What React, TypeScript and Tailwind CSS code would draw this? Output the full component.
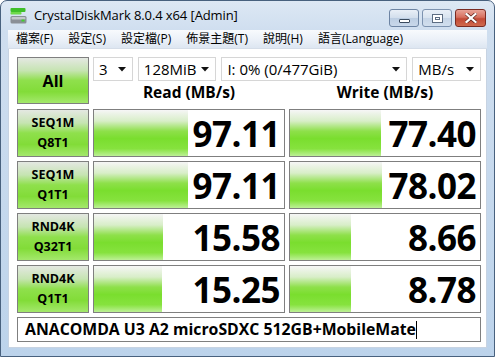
const rows = [
  { label: ["SEQ1M", "Q8T1"], read: "97.11", readBar: 94, write: "77.40", writeBar: 91 },
  { label: ["SEQ1M", "Q1T1"], read: "97.11", readBar: 94, write: "78.02", writeBar: 92 },
  { label: ["RND4K", "Q32T1"], read: "15.58", readBar: 69, write: "8.66", writeBar: 61 },
  { label: ["RND4K", "Q1T1"], read: "15.25", readBar: 68, write: "8.78", writeBar: 61 },
];

const menus = ["檔案(F)", "設定(S)", "設定檔(P)", "佈景主題(T)", "說明(H)", "語言(Language)"];

const greenLabel =
  "bg-[linear-gradient(to_bottom,#e4e8e2_0%,#c6e4b2_28%,#8fe04c_50%,#82dc38_75%,#a4e86c_100%)]";
const greenBar =
  "bg-[linear-gradient(to_bottom,#f6f6f6_0%,#d8eec8_24%,#8ee04a_46%,#7ade2e_62%,#86e23e_84%,#bdf096_100%)]";

const AppIcon = () => (
  <svg width="17" height="17" viewBox="0 0 17 17">
    <rect x="0.5" y="1" width="15" height="4" rx="1" fill="#3fbf2a" />
    <rect x="0.5" y="5" width="11" height="2.5" rx="0.8" fill="#6fd94a" />
    <rect x="0.5" y="9" width="16" height="7.5" rx="1.5" fill="#8a8f96" />
    <rect x="1.5" y="10" width="14" height="2.5" rx="1" fill="#c3c7cc" />
    <rect x="11.5" y="12.5" width="3" height="2" fill="#3fd12a" />
  </svg>
);

const Arrow = () => (
  <svg width="8" height="5" viewBox="0 0 8 5" className="shrink-0">
    <path d="M0 0 H8 L4 4.5 Z" fill="#111" />
  </svg>
);

const Select = ({ text, w }: { text: string; w: string }) => (
  <div
    className={`${w} h-[24px] flex items-center justify-between border border-[#d6d6d6] bg-white pl-[5px] pr-[6px] text-[15px] text-black`}
  >
    <span className="whitespace-nowrap">{text}</span>
    <Arrow />
  </div>
);

const LabelBox = ({ lines }: { lines: string[] }) => (
  <div
    className={`h-[48px] border-[1.5px] border-[#7f7f7f] ${greenLabel} flex flex-col items-center justify-center text-[12.5px] font-bold leading-[20px] text-black`}
  >
    {lines.map((l) => (
      <div key={l}>{l}</div>
    ))}
  </div>
);

const ResultBox = ({ value, bar }: { value: string; bar: number }) => (
  <div className="relative h-[48px] border-[1.5px] border-[#7f7f7f] bg-white flex items-center justify-end pr-[4px]">
    <div className={`absolute left-0 top-0 bottom-0 ${greenBar}`} style={{ width: bar }} />
    <span className="relative text-[35px] font-bold leading-none tracking-[-0.5px] text-black">{value}</span>
  </div>
);

export default function App() {
  return (
    <div className="w-[496px] h-[358px] font-['Open_Sans','Noto_Sans_CJK_TC',sans-serif]">
      <div className="w-[495px] h-[357px] rounded-t-[7px] border border-[#48617e] bg-[linear-gradient(to_bottom,#dde8f4_0px,#cfdeef_30px,#bcd3eb_100%)] flex flex-col">
        {/* title bar */}
        <div className="h-[29px] flex items-center pl-[9px] pr-[8px] shrink-0">
          <AppIcon />
          <div className="ml-[7px] text-[13px] text-black tracking-[-0.1px]">CrystalDiskMark 8.0.4 x64 [Admin]</div>
          <div className="ml-auto flex gap-[3px] self-start mt-[8px]">
            <div className="w-[30px] h-[18px] rounded-[3px] border border-[#6d84a3] bg-[linear-gradient(to_bottom,#e9eff7_0%,#d2deec_50%,#bccde2_51%,#c9d8ea_100%)] flex items-center justify-center">
              <div className="w-[11px] h-[4px] mt-[5px] bg-white border border-[#3a4a5e] rounded-[1px]" />
            </div>
            <div className="w-[30px] h-[18px] rounded-[3px] border border-[#7d93b0] bg-[linear-gradient(to_bottom,#e9eff7_0%,#d8e3ef_50%,#c6d5e7_51%,#d2dfee_100%)] flex items-center justify-center">
              <div className="w-[11px] h-[9px] border-[1.5px] border-[#5d6d82] bg-white flex items-center justify-center">
                <div className="w-[5px] h-[3px] border border-[#5d6d82]" />
              </div>
            </div>
            <div className="w-[31px] h-[18px] rounded-[3px] border border-[#7a2b22] bg-[linear-gradient(to_bottom,#e8a397_0%,#d7705f_45%,#c24a36_55%,#d06a4e_100%)] flex items-center justify-center">
              <svg width="12" height="10" viewBox="0 0 12 10">
                <path d="M1.5 1 L10.5 9 M10.5 1 L1.5 9" stroke="#5a2018" strokeWidth="3.6" strokeLinecap="square" />
                <path d="M1.5 1 L10.5 9 M10.5 1 L1.5 9" stroke="#ffffff" strokeWidth="2.2" strokeLinecap="square" />
              </svg>
            </div>
          </div>
        </div>

        {/* body */}
        <div className="flex-1 px-[7px] pb-[8px] flex flex-col">
          <div className="h-[19px] flex items-center gap-[15px] pl-[8px] text-[12px] text-black bg-[linear-gradient(to_bottom,#f8fafd_0%,#e9eff7_60%,#dde6f1_100%)] border-b border-[#d5dde8] shrink-0">
            {menus.map((m) => (
              <span key={m}>{m}</span>
            ))}
          </div>
          <div className="flex-1 bg-white px-[8px] pt-[8px] border border-t-0 border-[#c7d3e2]">
            <div className="grid grid-cols-[72px_192px_192px] gap-x-[4px]">
              <div
                className={`h-[47px] border-[1.5px] border-[#7f7f7f] ${greenLabel} flex items-center justify-center text-[16px] font-bold text-black`}
              >
                All
              </div>
              <div className="col-span-2 flex flex-col">
                <div className="flex gap-[5px]">
                  <Select text="3" w="w-[40px]" />
                  <Select text="128MiB" w="w-[79px]" />
                  <Select text="I: 0% (0/477GiB)" w="w-[187px]" />
                  <Select text="MB/s" w="w-[69px]" />
                </div>
                <div className="grid grid-cols-2 gap-x-[4px] h-[23px] items-center text-[15.5px] font-bold text-black">
                  <div className="text-center">Read (MB/s)</div>
                  <div className="text-center">Write (MB/s)</div>
                </div>
              </div>
            </div>
            <div className="mt-[5px] grid grid-cols-[72px_192px_192px] gap-x-[4px] gap-y-[4px]">
              {rows.map((r) => (
                <div key={r.label.join()} className="contents">
                  <LabelBox lines={r.label} />
                  <ResultBox value={r.read} bar={r.readBar} />
                  <ResultBox value={r.write} bar={r.writeBar} />
                </div>
              ))}
            </div>
            <div className="mt-[4px] h-[25px] w-[464px] border-[1.5px] border-[#7f7f7f] bg-white flex items-center pl-[7px] text-[15.8px] font-bold text-black">
              <span>ANACOMDA U3 A2 microSDXC 512GB+MobileMate</span>
              <span className="w-[1px] h-[18px] bg-black" />
            </div>
          </div>
        </div>
      </div>
    </div>
  );
}
